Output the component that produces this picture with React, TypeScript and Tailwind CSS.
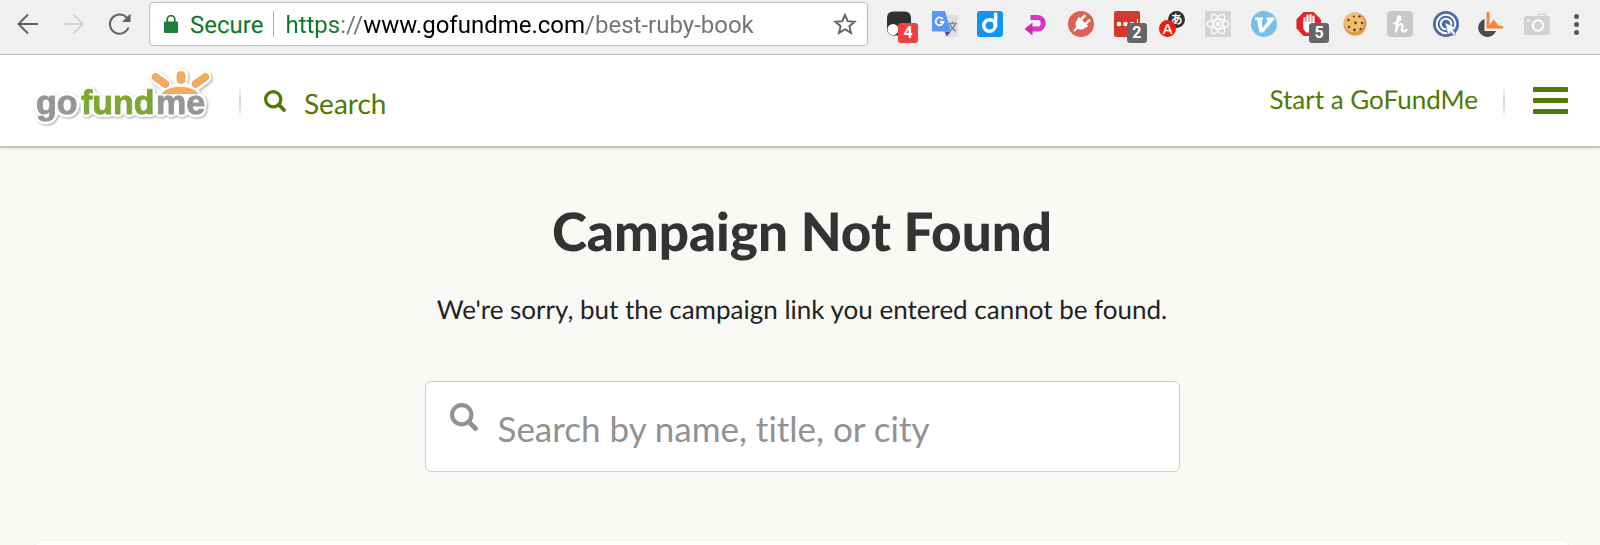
import { useState } from "react";
import type { ReactNode } from "react";

const SearchIcon = ({ className }: { className: string }) => (
  <svg viewBox="0 0 27 27" className={className} fill="none" stroke="currentColor" aria-hidden="true">
    <circle cx="11.3" cy="11.3" r="9.3" strokeWidth="4" />
    <path d="M18.2 18.2 24.6 24.6" strokeWidth="4.6" strokeLinecap="round" />
  </svg>
);

const Badge = ({ className, children }: { className: string; children: ReactNode }) => (
  <span
    className={`absolute top-3 flex h-5 w-5 items-center justify-center rounded-[3px] font-[Roboto,sans-serif] text-base font-bold text-white ${className}`}
  >
    {children}
  </span>
);

type Extension = { name: string; icon: ReactNode; badge?: string; badgeClass?: string };

const extensions: Extension[] = [
  {
    name: "Tampermonkey",
    badge: "4",
    badgeClass: "left-3 bg-[#f04040]",
    icon: (
      <>
        <rect x="1" y="0.5" width="24" height="24" rx="6" fill="#303030" />
        <circle cx="7" cy="18.5" r="5.5" fill="#fff" />
        <circle cx="18" cy="18.5" r="5.5" fill="#fff" />
      </>
    ),
  },
  {
    name: "Google Translate",
    icon: (
      <>
        <path d="M9 4h16q1 0 1 1v20q0 1-1 1H14z" fill="#dfdfdf" />
        <path d="M12.5 20.5h6.5L14.800 25.500z" fill="#4356b5" />
        <path d="M1 0h12l6 20.500H1q-1 0-1-1V1q0-1 1-1z" fill="#5a97f0" />
        <path d="M10.800 8.200A3.900 3.900 0 1 0 11.400 11H8" fill="none" stroke="#fff" strokeWidth="1.8" />
        <path d="M16.500 12.500h8.500M20.600 10.500v2M23.300 12.700c-1 3.500-3.200 5.800-5.300 7M18 13.200c1 3.200 3 5.500 6 7" fill="none" stroke="#76909b" strokeWidth="1.5" />
      </>
    ),
  },
  {
    name: "Diigo",
    icon: (
      <>
        <rect width="26" height="26" rx="3" fill="#0d96f8" />
        <circle cx="12.5" cy="14.5" r="5.8" fill="none" stroke="#fff" strokeWidth="3.5" />
        <path d="M18.600 3v12" stroke="#fff" strokeWidth="3.5" strokeLinecap="round" />
      </>
    ),
  },
  {
    name: "Go back",
    icon: (
      <>
        <path d="M7.500 6.500h7.500a5 5.500 0 0 1 0 11.500H8" fill="none" stroke="#d935c4" strokeWidth="5" />
        <path d="M1.500 18 9.500 11.500V24.500z" fill="#c92db5" />
      </>
    ),
  },
  {
    name: "Proxy plug",
    icon: (
      <>
        <circle cx="13" cy="13" r="13" fill="#dd6252" />
        <g transform="rotate(45 13 13)" fill="#fff">
          <path d="M7.500 11h11v2a5.500 5.500 0 0 1-11 0z" />
          <rect x="6.5" y="9.5" width="13" height="2.5" rx="0.8" />
          <rect x="8.5" y="3.5" width="2.5" height="7" rx="0.8" />
          <rect x="15" y="3.5" width="2.5" height="7" rx="0.8" />
          <rect x="11.8" y="17" width="2.4" height="6" rx="0.8" />
        </g>
      </>
    ),
  },
  {
    name: "LastPass",
    badge: "2",
    badgeClass: "left-[13px] bg-[#666]",
    icon: (
      <>
        <rect width="26" height="26" rx="2" fill="#d53a32" />
        <circle cx="5" cy="13" r="2.3" fill="#fff" />
        <circle cx="11.5" cy="13" r="2.3" fill="#fff" />
        <circle cx="18" cy="13" r="2.3" fill="#fff" />
        <path d="M23.500 8v10" stroke="#fff" strokeWidth="1.2" />
      </>
    ),
  },
  {
    name: "Kana reader",
    icon: (
      <>
        <circle cx="17.5" cy="8.5" r="8.5" fill="#303030" />
        <text x="17.5" y="13" textAnchor="middle" fontSize="12" fontWeight="700" fill="#fff" className="font-['Noto_Sans_CJK_JP',sans-serif]">あ</text>
        <circle cx="8.5" cy="17.5" r="8.5" fill="#f5180f" />
        <text x="8.5" y="22.5" textAnchor="middle" fontSize="14" fontWeight="700" fill="#fff" className="font-[Lato,sans-serif]">A</text>
      </>
    ),
  },
  {
    name: "React Developer Tools",
    icon: (
      <>
        <rect width="26" height="26" rx="1" fill="#d4d4d4" />
        <g fill="none" stroke="#fff" strokeWidth="1.3">
          <ellipse cx="13" cy="13" rx="11" ry="4.3" />
          <ellipse cx="13" cy="13" rx="11" ry="4.3" transform="rotate(60 13 13)" />
          <ellipse cx="13" cy="13" rx="11" ry="4.3" transform="rotate(120 13 13)" />
        </g>
        <circle cx="13" cy="13" r="2.2" fill="#fff" />
      </>
    ),
  },
  {
    name: "Vimium",
    icon: (
      <>
        <circle cx="13" cy="13" r="13" fill="#77bfe6" />
        <path d="M4 6.500h8v2l-1.200.5.700 8.500 5.500-8-1.500-.5V6.500h8v1.800L12 21.500H8.500L6 9l-2-.5z" fill="#fff" />
      </>
    ),
  },
  {
    name: "AdBlock",
    badge: "5",
    badgeClass: "left-[13px] bg-[#666]",
    icon: (
      <>
        <path d="M7.500 1h10L25 8.500v9L17.500 25h-10L.5 17.500v-9z" fill="#df2525" />
        <path d="M8.500 13V7M11.500 12V4.500M14.500 12V4M17.500 13V5.500" stroke="#fff" strokeWidth="2.2" strokeLinecap="round" />
        <path d="M7.400 11h11.200v4l2.400-3 1.500 1-4 8.500H10L7.400 18z" fill="#fff" />
      </>
    ),
  },
  {
    name: "Cookies",
    icon: (
      <>
        <circle cx="13" cy="13" r="11.5" fill="#dc9a48" />
        <circle cx="12" cy="11.5" r="10" fill="#efbd74" />
        <g fill="#704018">
          <circle cx="6.5" cy="9" r="1.3" />
          <circle cx="12" cy="5.5" r="1.1" />
          <circle cx="17.5" cy="5.5" r="1.3" />
          <circle cx="13.5" cy="12" r="1.4" />
          <circle cx="20" cy="12" r="1.3" />
          <circle cx="7" cy="16" r="1.2" />
          <circle cx="12.5" cy="19" r="1.4" />
          <circle cx="18.5" cy="18" r="1.2" />
        </g>
      </>
    ),
  },
  {
    name: "Honey",
    icon: (
      <>
        <rect width="26" height="26" rx="4" fill="#c8c8c8" />
        <path d="M7 12.500c5-1 7.500-5 6-7-1.500-1.200-2.500 2-3 6L9 20.500c.5-4 2.500-7.500 5-7.500s1.500 3 1 5 .8 3.500 4.500 1" fill="none" stroke="#fff" strokeWidth="2.2" strokeLinecap="round" strokeLinejoin="round" />
      </>
    ),
  },
  {
    name: "Click target",
    icon: (
      <>
        <circle cx="13" cy="13" r="13" fill="#4c69a8" />
        <circle cx="13" cy="13" r="9.3" fill="none" stroke="#fff" strokeWidth="2" />
        <circle cx="13" cy="13" r="5.3" fill="none" stroke="#fff" strokeWidth="2" />
        <path d="M12 11.500 24 17l-4.500 1.800 3.500 4-2.200 1.700-3.300-4-2.500 3.500z" fill="#fff" stroke="#4c69a8" strokeWidth="0.7" />
      </>
    ),
  },
  {
    name: "Crop ruler",
    icon: (
      <>
        <path d="M6.500 8v12h11.500a9.200 9.200 0 1 1-11.500-12z" fill="#4b4b4b" />
        <path d="M8.500 1h3v13l4-5.500 2.500 2.500 2 3.500 5 .5v2.500H8.500z" fill="#fb8536" />
      </>
    ),
  },
  {
    name: "Screenshot",
    icon: (
      <>
        <path d="M14.500 3h6.500v3h-6.500z" fill="none" stroke="#d1d1d1" strokeWidth="1.5" />
        <rect y="5" width="26" height="19" rx="2" fill="#d1d1d1" />
        <circle cx="14" cy="14.5" r="5.2" fill="none" stroke="#fff" strokeWidth="2" />
        <path d="M3 9.500h3" stroke="#fff" strokeWidth="1.5" />
      </>
    ),
  },
];

const BrowserBar = () => {
  const [url, setUrl] = useState("https://www.gofundme.com/best-ruby-book");

  return (
    <div className="flex h-[55px] items-start border-b border-[#b4b4b4] bg-[#f0f0f0] px-4 pt-0.5">
      <div className="flex h-11 items-center gap-[22px]">
        <button type="button" aria-label="Back" className="text-[#5f6368]">
          <svg viewBox="0 0 24 24" className="size-6" fill="none" stroke="currentColor" strokeWidth="2">
            <path d="M22 12H2.500M12 2.500 2.500 12l9.500 9.500" />
          </svg>
        </button>
        <button type="button" aria-label="Forward" className="text-[#d3d4d4]">
          <svg viewBox="0 0 24 24" className="size-6" fill="none" stroke="currentColor" strokeWidth="2">
            <path d="M1.500 12h19.500M11.500 2.500l9.500 9.500-9.500 9.500" />
          </svg>
        </button>
        <button type="button" aria-label="Reload" className="text-[#5f6368]">
          <svg viewBox="0 0 24 24" className="size-6" fill="none" stroke="currentColor" strokeWidth="2">
            <path d="M20.500 15.500A9.600 9.600 0 1 1 19 6" />
            <path d="M22.500 1.500V10H14z" fill="currentColor" stroke="none" />
          </svg>
        </button>
      </div>
      <div className="ml-[17px] flex h-11 min-w-0 flex-1 items-center rounded-sm border border-[#bcbcbc] bg-white pl-3.5 pr-2.5 font-[Roboto,sans-serif] text-2xl">
        <svg viewBox="0 0 14 18" className="h-[18px] w-3.5 shrink-0" aria-hidden="true">
          <rect y="6.5" width="14" height="11.5" rx="1" fill="#1e8038" />
          <path d="M3.200 7V4.500a3.800 3.800 0 0 1 7.600 0V7" fill="none" stroke="#1e8038" strokeWidth="1.8" />
        </svg>
        <span className="ml-3 pt-0.5 text-[#0b7a27]">Secure</span>
        <span className="ml-2.5 mr-[11px] h-[26px] w-px bg-[#b0b0b0]" />
        <input
          aria-label="Address"
          value={url}
          onChange={(event) => setUrl(event.target.value)}
          className="min-w-0 flex-1 bg-[linear-gradient(to_right,#0b7a27_54px,#737373_54px,#737373_78px,#000_78px,#000_301px,#737373_301px)] bg-clip-text pt-0.5 text-transparent caret-black outline-none"
        />
        <button type="button" aria-label="Bookmark this page">
          <svg viewBox="0 0 24 24" className="size-6" fill="none" stroke="#5f6368" strokeWidth="1.9">
            <path d="m12 2.800 2.700 6.300 6.900.6-5.200 4.500 1.600 6.700-6-3.600-6 3.600 1.600-6.700L2.400 9.700l6.900-.6z" />
          </svg>
        </button>
      </div>
      <div className="ml-[18px] flex h-11 w-[664px] shrink-0 items-center justify-between">
        {extensions.map((extension) => (
          <button key={extension.name} type="button" aria-label={extension.name} className="relative size-[26px]">
            <svg viewBox="0 0 26 26" className="size-[26px] overflow-visible">{extension.icon}</svg>
            {extension.badge ? <Badge className={extension.badgeClass ?? ""}>{extension.badge}</Badge> : null}
          </button>
        ))}
      </div>
      <button type="button" aria-label="Browser menu" className="ml-[18px] flex h-11 w-4 flex-col items-center justify-center gap-[3px]">
        <span className="size-[5px] rounded-full bg-[#55585c]" />
        <span className="size-[5px] rounded-full bg-[#55585c]" />
        <span className="size-[5px] rounded-full bg-[#55585c]" />
      </button>
    </div>
  );
};

const Logo = () => (
  <svg viewBox="0 0 184 64" className="h-16 w-[184px] overflow-visible drop-shadow-[1px_1px_1px_#aaa]" role="img" aria-label="gofundme">
    {/* grows a white sticker edge around the wordmark and the sun */}
    <filter id="sticker" x="-10%" y="-20%" width="120%" height="140%">
      <feGaussianBlur in="SourceAlpha" stdDeviation="2.2" />
      <feComponentTransfer result="edge">
        <feFuncA type="linear" slope="14" intercept="-0.9" />
      </feComponentTransfer>
      <feFlood floodColor="#fff" />
      <feComposite in2="edge" operator="in" />
      <feMerge>
        <feMergeNode />
        <feMergeNode in="SourceGraphic" />
      </feMerge>
    </filter>
    <g filter="url(#sticker)">
      <g fontSize="34" fontWeight="700" strokeWidth="1" className="font-['Liberation_Sans',sans-serif]">
        <text x="4" y="47" fill="#969696" stroke="#969696">go</text>
        <text x="49" y="47" fill="#7da82a" stroke="#7da82a">fund</text>
        <text x="124" y="47" fill="#969696" stroke="#969696">me</text>
      </g>
      <g fill="#f3ab5c" stroke="#e39a4c" strokeWidth="0.8">
        <path d="M130 26.500c7-8.500 29-8.500 36 0z" />
        <rect x="145" y="4.5" width="8" height="12" rx="3.5" />
        <rect x="-9.5" y="-3.5" width="19" height="7" rx="3.5" transform="translate(128.500 13.500) rotate(35)" />
        <rect x="-9.5" y="-3.5" width="19" height="7" rx="3.5" transform="translate(168.500 13.500) rotate(-35)" />
      </g>
    </g>
  </svg>
);

const Divider = () => (
  <span className="h-9 w-0.5 bg-linear-to-b from-transparent via-[#cfcfcf] to-transparent" />
);

const SiteHeader = () => (
  <header className="relative flex h-[93px] items-center border-b-2 border-[#c6c7c3] bg-white px-8 text-[#4f7a05] shadow-[0_1px_2px_#dcddd8]">
    <a href="#home" className="-mt-1">
      <Logo />
    </a>
    <span className="ml-[23px] flex">
      <Divider />
    </span>
    <a href="#search" className="ml-[23px] flex items-center gap-[18px] text-[28px]">
      <SearchIcon className="size-[22px]" />
      <span className="pt-1">Search</span>
    </a>
    <div className="ml-auto flex items-center">
      <a href="#start" className="pb-0.5 text-[26px]">Start a GoFundMe</a>
      <span className="ml-[25px] flex">
        <Divider />
      </span>
      <button type="button" aria-label="Menu" className="ml-7 flex w-[35px] flex-col gap-1.5">
        <span className="h-[5px] rounded-[1px] bg-current" />
        <span className="h-[5px] rounded-[1px] bg-current" />
        <span className="h-[5px] rounded-[1px] bg-current" />
      </button>
    </div>
  </header>
);

export default function App() {
  return (
    <div className="h-screen overflow-hidden bg-[#f9faf5] font-[Lato,sans-serif] [font-variant-ligatures:none] [text-rendering:geometricPrecision]">
      <BrowserBar />
      <SiteHeader />
      <main className="pl-[34px] pr-[30px] text-center">
        <h1 className="pt-[52px] text-[53px] font-black leading-[64px] text-[#333]">Campaign Not Found</h1>
        <p className="mt-[27px] text-[26px] leading-9 text-[#222]">We're sorry, but the campaign link you entered cannot be found.</p>
        <label className="mx-auto mt-[54px] flex h-[91px] max-w-[755px] items-start rounded-md border border-[#cfd0cd] bg-white pl-6 pr-4">
          <SearchIcon className="mt-[21px] size-7 shrink-0 text-[#929292]" />
          <input
            type="search"
            aria-label="Search by name, title, or city"
            placeholder="Search by name, title, or city"
            className="ml-5 h-[89px] min-w-0 flex-1 bg-transparent pt-0.5 text-[35px] outline-none placeholder:text-[#929292]"
          />
        </label>
        <section className="mt-[68px] h-20 rounded-lg border border-[#f0f1ed] bg-white" />
      </main>
    </div>
  );
}
